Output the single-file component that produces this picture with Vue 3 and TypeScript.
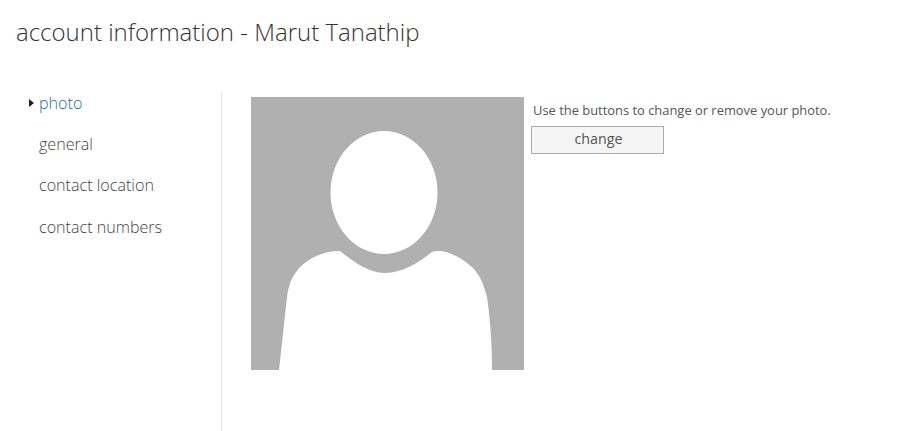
<script setup lang="ts">
const navItems = ['photo', 'general', 'contact location', 'contact numbers']
const selected = 'photo'
</script>
<template>
  <div class="page">
    <h1 class="title">account information - Marut Tanathip</h1>
    <div class="body_row">
      <ul class="side_nav">
        <li v-for="item in navItems" :key="item" class="nav_item" :class="{ nav_selected: item === selected }">
          <span v-if="item === selected" class="nav_arrow"></span>
          {{ item }}
        </li>
      </ul>
      <div class="content">
        <svg class="photo" width="273" height="273" viewBox="0 0 273 273">
          <rect width="273" height="273" fill="#b0b0b0" />
          <ellipse cx="133" cy="95.5" rx="53.5" ry="61.5" fill="#fff" />
          <path
            d="M28 273 L36 200 C38 186 41 180 46 174 C54 163 70 154 89 154 C97 160 115 176 134 176 C152 176 168 165 181 155 C190 152 205 156 221 170 C229 178 233 188 236 200 C239 220 241 245 241 273 Z"
            fill="#fff"
          />
        </svg>
        <div class="photo_side">
          <p class="hint">Use the buttons to change or remove your photo.</p>
          <button class="change_btn">change</button>
        </div>
      </div>
    </div>
  </div>
</template>
<style scoped>
.page {
  height: 431px;
  display: flex;
  flex-direction: column;
  overflow: hidden;
  font-family: "Open Sans", "Liberation Sans", sans-serif;
  background: #fff;
}

.title {
  margin: 0;
  padding: 15px 0 0 16px;
  height: 77px;
  box-sizing: border-box;
  font-size: 24px;
  line-height: 33px;
  font-weight: 300;
  color: #333;
}

.body_row {
  display: flex;
  flex: 1;
}

.side_nav {
  list-style: none;
  margin: 15px 0 0;
  padding: 0 0 0 39px;
  width: 182px;
  box-sizing: content-box;
  border-right: 1px solid #e6e6e6;
}

.nav_item {
  position: relative;
  height: 41.2px;
  font-size: 16.1px;
  line-height: 22px;
  font-weight: 300;
  color: #444;
}

.nav_selected {
  color: #1e6bb0;
}

.nav_arrow {
  position: absolute;
  left: -10px;
  top: 7px;
  width: 0;
  height: 0;
  border-left: 5px solid #222;
  border-top: 4px solid transparent;
  border-bottom: 4px solid transparent;
}

.content {
  display: flex;
  padding: 20px 0 0 29px;
}

.photo {
  display: block;
}

.photo_side {
  padding: 5px 0 0 7px;
}

.hint {
  margin: 0 0 7px 2px;
  font-size: 12.92px;
  line-height: 17px;
  color: #555;
  white-space: nowrap;
}

.change_btn {
  display: block;
  width: 133px;
  height: 28px;
  padding: 0 0 4px 2px;
  border: 1px solid #ababab;
  background: #f5f5f5;
  font-family: inherit;
  font-size: 14.3px;
  color: #555;
}
</style>
